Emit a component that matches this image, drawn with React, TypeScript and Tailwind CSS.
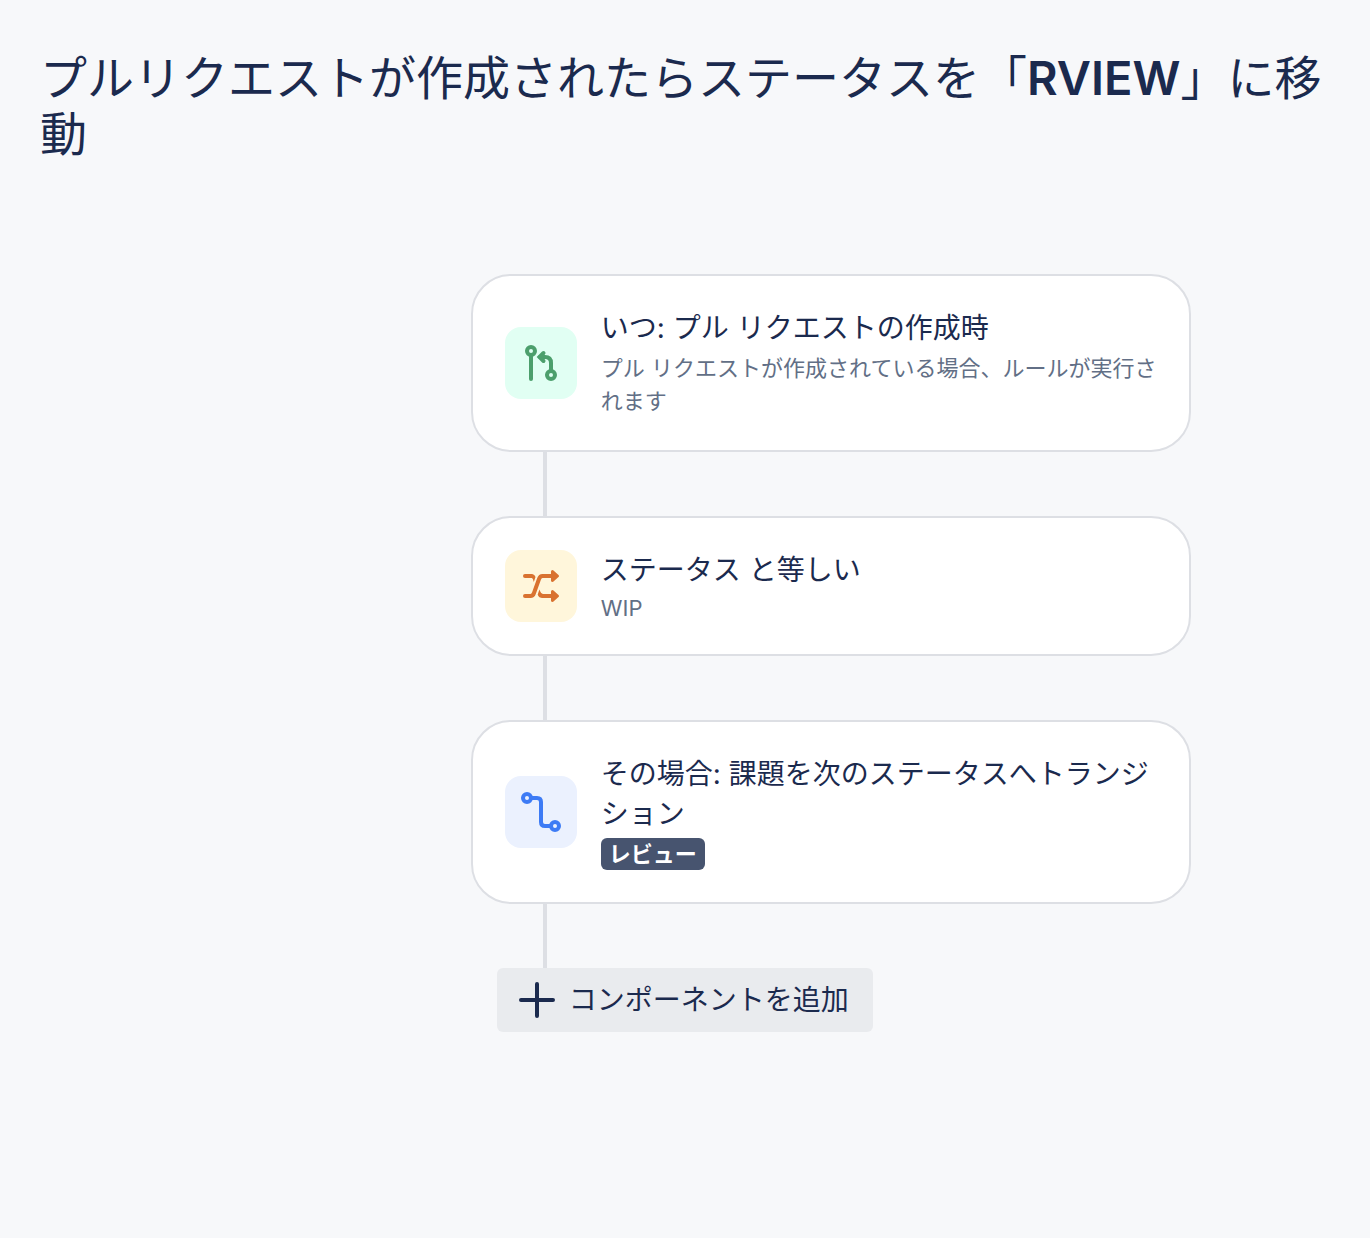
import type { ReactNode } from 'react';

function PullRequestIcon() {
  return (
    <svg viewBox="0 0 72 72" className="size-[72px]" fill="none" stroke="#4c9f6c" strokeWidth="4" strokeLinecap="round" strokeLinejoin="round" aria-hidden="true">
      <circle cx="26" cy="24" r="4" />
      <path d="M26 29V52" />
      <circle cx="46" cy="48" r="4" />
      <path d="M46 43V36Q46 30 40 30H35" />
      <path d="M38.5 26L34.5 30L38.5 34" strokeLinejoin="miter" />
    </svg>
  );
}

function ShuffleIcon() {
  return (
    <svg viewBox="0 0 72 72" className="size-[72px]" fill="none" stroke="#d97230" strokeWidth="4" strokeLinecap="round" strokeLinejoin="round" aria-hidden="true">
      <path d="M20 46H25.5Q28 46 29 43L34 29Q35 26 37.5 26H50" />
      <path d="M20 26H26" />
      <path d="M26 24Q29.500 24 30.500 27L28.800 32Q28 28.500 27 28H26Z" fill="#d97230" stroke="none" />
      <path d="M38 46H50" />
      <path d="M38 48Q33.500 48 32.700 44.500L34.400 39.500Q35.800 43.500 38 44Z" fill="#d97230" stroke="none" />
      <path d="M47.500 21.500L52.500 26L47.500 30.500Z" fill="#d97230" strokeWidth="3" />
      <path d="M47.500 41.500L52.500 46L47.500 50.500Z" fill="#d97230" strokeWidth="3" />
    </svg>
  );
}

function TransitionIcon() {
  return (
    <svg viewBox="0 0 72 72" className="size-[72px]" fill="none" stroke="#3d7bf5" strokeWidth="4" aria-hidden="true">
      <circle cx="22" cy="22" r="4" />
      <circle cx="50" cy="50" r="4" />
      <path d="M27 22H32Q36 22 36 26V46Q36 50 40 50H45" />
    </svg>
  );
}

function StepCard({ icon, tint, title, children }: { icon: ReactNode; tint: string; title: string; children: ReactNode }) {
  return (
    <section className="flex items-center gap-6 rounded-[40px] border-2 border-[#dddfe4] bg-white py-8 pr-6 pl-8">
      <div className={`shrink-0 overflow-hidden rounded-2xl ${tint}`}>{icon}</div>
      <div className="min-w-0 flex-1">
        <h2 className="text-[28px] leading-10 text-[#1b2a4e]">{title}</h2>
        {children}
      </div>
    </section>
  );
}

function Connector() {
  return <div className="ml-[72px] h-16 w-1 bg-[#dddfe4]" />;
}

export default function App() {
  return (
    <main className="min-h-screen bg-[#f7f8fa] px-10 pt-[50px] pb-10 font-['Inter','Noto_Sans_CJK_JP',sans-serif] text-[#1b2a4e]" lang="ja">
      <h1 className="text-[47px] leading-14">
        プルリクエストが作成されたらステータスを「<span className="font-semibold">RVIEW</span>」に移動
      </h1>

      <div className="mt-28 ml-[33.4%] max-w-[720px]">
        <StepCard icon={<PullRequestIcon />} tint="bg-[#e1fff3]" title="いつ: プル リクエストの作成時">
          <p className="mt-1 text-[22px] leading-[33px] text-[#626f86]">
            プル リクエストが作成されている場合、ルールが実行されます
          </p>
        </StepCard>
        <Connector />
        <StepCard icon={<ShuffleIcon />} tint="bg-[#fff6db]" title="ステータス と等しい">
          <p className="mt-1 text-[22px] leading-7 text-[#626f86]">WIP</p>
        </StepCard>
        <Connector />
        <StepCard icon={<TransitionIcon />} tint="bg-[#ebf1fe]" title="その場合: 課題を次のステータスへトランジション">
          <p className="mt-1 flex">
            <span className="rounded-md bg-[#47546f] px-2 text-[22px] leading-8 font-bold text-white">レビュー</span>
          </p>
        </StepCard>
        <Connector />
        <button type="button" className="ml-[26px] flex h-16 items-center gap-2 rounded-md bg-[#e9ebee] pr-6 pl-4 text-[28px] leading-10">
          <svg viewBox="0 0 48 48" className="size-12" fill="none" stroke="currentColor" strokeWidth="4" strokeLinecap="round" aria-hidden="true">
            <path d="M24 8V40M8 24H40" />
          </svg>
          コンポーネントを追加
        </button>
      </div>
    </main>
  );
}
